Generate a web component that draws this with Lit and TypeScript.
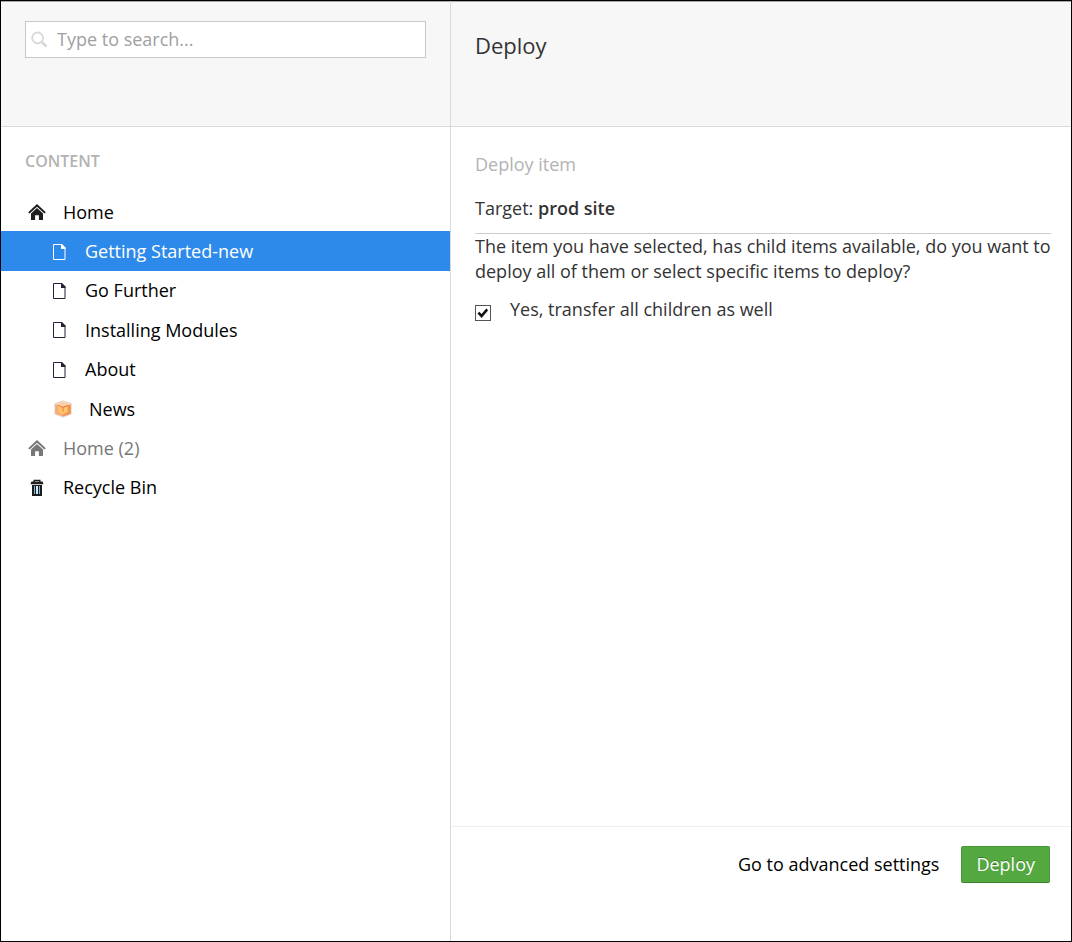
import { LitElement, html, css, svg } from "lit";
import { customElement, property, state } from "lit/decorators.js";
import { classMap } from "lit/directives/class-map.js";

type IconName = "home" | "page" | "box" | "bin" | "search";

const icons = {
  home: svg`
    <path fill="currentColor" d="M9 1 17.8 9.2 16.4 10.6 9 3.8 1.6 10.6.2 9.2Z"/>
    <path fill="currentColor" d="M9 5 15 10.6V17h-4.1v-4.8H7.1V17H3v-6.4Z"/>`,
  page: svg`
    <path fill="none" stroke="currentColor" d="M3.5 1.5h8l3.5 3.5v11.5H3.5Z"/>
    <path fill="currentColor" d="M11 1h1l3.5 3.5V6H11Z"/>`,
  box: svg`
    <path fill="#e6dcd5" d="M9 .3 17.7 3.2V14.4L9 17.8.3 14.4V3.2Z"/>
    <path fill="#fbd0a8" d="M9 1.5 16.6 4 9 6.6 1.4 4Z"/>
    <path fill="#f7ab74" d="M1.2 4.2 9 7V16.4L1.2 13.8Z"/>
    <path fill="#f39250" d="M16.8 4.2 9 7V16.4L16.8 13.8Z"/>
    <path fill="#ffc56c" d="M4.2 6 9 8l4.8-2v6L9 14.6 4.2 12Z"/>
    <path fill="none" stroke="#f17a3c" d="m4 5.2 5 2.2 5-2.2M9 7.4v4.6"/>`,
  bin: svg`
    <path fill="none" stroke="currentColor" stroke-width="1.4" d="M6.2 3V1.4h5.6V3"/>
    <path fill="currentColor" d="M3.4 2.6h11.2l.9 2.6h-13Z"/>
    <path fill="currentColor" d="M4 6h10v11H4Z"/>
    <path fill="#7fb4dc" d="M6 7h1v8H6Z"/>
    <path fill="#c9ecf5" d="M8 7h2v8H8Z"/>
    <path fill="#7fb4dc" d="M11 7h1v8h-1Z"/>`,
  search: svg`
    <circle cx="6.6" cy="6.9" r="5.4" fill="none" stroke="currentColor" stroke-width="1.8"/>
    <path fill="none" stroke="currentColor" stroke-width="3" stroke-linecap="round" d="m11.6 11.9 3 2.8"/>`,
};

const icon = (name: IconName) =>
  html`<svg class="icon" viewBox="0 0 18 18" aria-hidden="true">${icons[name]}</svg>`;

interface TreeNode {
  label: string;
  icon: IconName;
  child?: boolean;
  muted?: boolean;
}

@customElement("content-tree")
class ContentTree extends LitElement {
  @property({ attribute: false }) nodes: TreeNode[] = [];
  @state() selected = 1;

  static styles = css`
    :host { display: block; }
    ul {
      display: grid;
      grid-auto-rows: 1fr;
      height: 315px;
      margin: 0;
      padding: 0;
      list-style: none;
    }
    li { display: flex; }
    a {
      flex: 1;
      display: flex;
      align-items: center;
      gap: 17px;
      padding: 1px 24px 0 27px;
      color: #000;
      text-decoration: none;
      white-space: nowrap;
    }
    .icon { flex: none; width: 18px; height: 18px; color: #1d1d1d; }
    .child { padding-left: 49px; }
    .page { color: #000; }
    .page .icon { color: #2c1d38; }
    .box { padding-left: 53px; }
    .muted, .muted .icon { color: #777; }
    .selected { background: #2e8aea; }
    .selected, .selected .icon { color: #fff; }
  `;

  render() {
    return html`<ul>
      ${this.nodes.map(
        (node, i) => html`<li>
          <a
            href="#"
            class=${classMap({
              [node.icon]: true,
              child: !!node.child,
              muted: !!node.muted,
              selected: i === this.selected,
            })}
            @click=${(e: Event) => {
              e.preventDefault();
              this.selected = i;
            }}
            >${icon(node.icon)}<span>${node.label}</span></a
          >
        </li>`
      )}
    </ul>`;
  }
}

@customElement("app-root")
class AppRoot extends LitElement {
  private nodes: TreeNode[] = [
    { label: "Home", icon: "home" },
    { label: "Getting Started-new", icon: "page", child: true },
    { label: "Go Further", icon: "page", child: true },
    { label: "Installing Modules", icon: "page", child: true },
    { label: "About", icon: "page", child: true },
    { label: "News", icon: "box", child: true },
    { label: "Home (2)", icon: "home", muted: true },
    { label: "Recycle Bin", icon: "bin" },
  ];

  static styles = css`
    :host {
      display: grid;
      grid-template-columns: 450px 1fr;
      min-height: 100vh;
      box-sizing: border-box;
      border: 1px solid #000;
      background: #fff;
      color: #333;
      font: 18px/25px "Open Sans", sans-serif;
    }
    * { box-sizing: border-box; }
    .pane { display: flex; flex-direction: column; min-width: 0; }
    .tree { border-right: 1px solid #d9d9d9; }
    header {
      height: 126px;
      padding: 19px 24px;
      background: #f7f7f7;
      border-top: 1px solid #aaa;
      border-bottom: 1px solid #d9d9d9;
    }
    .search {
      display: flex;
      align-items: center;
      gap: 8px;
      height: 37px;
      padding: 0 5px;
      border: 1px solid #c8c8c8;
      background: #fff;
      color: #d9d9d9;
    }
    .search .icon { flex: none; width: 18px; height: 18px; }
    .search input {
      flex: 1;
      min-width: 0;
      padding: 0;
      border: 0;
      outline: 0;
      background: none;
      color: #333;
      font: inherit;
    }
    .search input::placeholder { color: #a0a0a0; opacity: 1; }
    h1 { margin: 0; padding: 9px 0; font-size: 22px; line-height: 30px; font-weight: 400; }
    h2 {
      margin: 0;
      padding: 23px 24px 20px;
      color: #b3b3b3;
      font-size: 16px;
      line-height: 22px;
      font-weight: 600;
    }
    .body { flex: 1; padding: 25px 20px 0 24px; }
    h3 { margin: 0; color: #b3b3b3; font-size: 18px; line-height: 25px; font-weight: 400; }
    p { margin: 0; }
    .target { padding: 19px 0 12px; border-bottom: 1px solid #ccc; }
    .target strong { font-weight: 600; }
    .check { display: flex; gap: 19px; margin-top: 13px; }
    .check input {
      appearance: none;
      flex: none;
      width: 16px;
      height: 16px;
      margin: 8px 0 0;
      border: 1px solid #555;
      background: #fff;
    }
    .check input:checked {
      background: #fff
        url('data:image/svg+xml,<svg xmlns="http://www.w3.org/2000/svg" viewBox="0 0 14 14"><path fill="none" stroke="%23111" stroke-width="2.6" d="m2.4 6.6 3.2 3.4 5.6-6.6"/></svg>')
        center / 14px 14px no-repeat;
    }
    footer {
      display: flex;
      justify-content: flex-end;
      align-items: flex-start;
      gap: 22px;
      height: 115px;
      padding: 19px 21px;
      border-top: 1px solid #eee;
    }
    footer a { line-height: 37px; color: #000; text-decoration: none; }
    button {
      height: 37px;
      padding: 0 14px;
      border: 1px solid #499a37;
      border-bottom-color: #3d842d;
      border-radius: 2px;
      background: #53a93f;
      color: #fff;
      font: inherit;
      text-shadow: 0 -1px 0 rgba(0, 0, 0, 0.25);
    }
  `;

  render() {
    return html`
      <nav class="pane tree">
        <header>
          <label class="search">
            ${icon("search")}
            <input type="text" placeholder="Type to search..." aria-label="Search" />
          </label>
        </header>
        <h2>CONTENT</h2>
        <content-tree .nodes=${this.nodes}></content-tree>
      </nav>
      <main class="pane">
        <header><h1>Deploy</h1></header>
        <section class="body">
          <h3>Deploy item</h3>
          <p class="target">Target: <strong>prod site</strong></p>
          <p>
            The item you have selected, has child items available, do you want to deploy all of
            them or select specific items to deploy?
          </p>
          <label class="check">
            <input type="checkbox" checked />
            <span>Yes, transfer all children as well</span>
          </label>
        </section>
        <footer>
          <a href="#">Go to advanced settings</a>
          <button type="button">Deploy</button>
        </footer>
      </main>
    `;
  }
}
